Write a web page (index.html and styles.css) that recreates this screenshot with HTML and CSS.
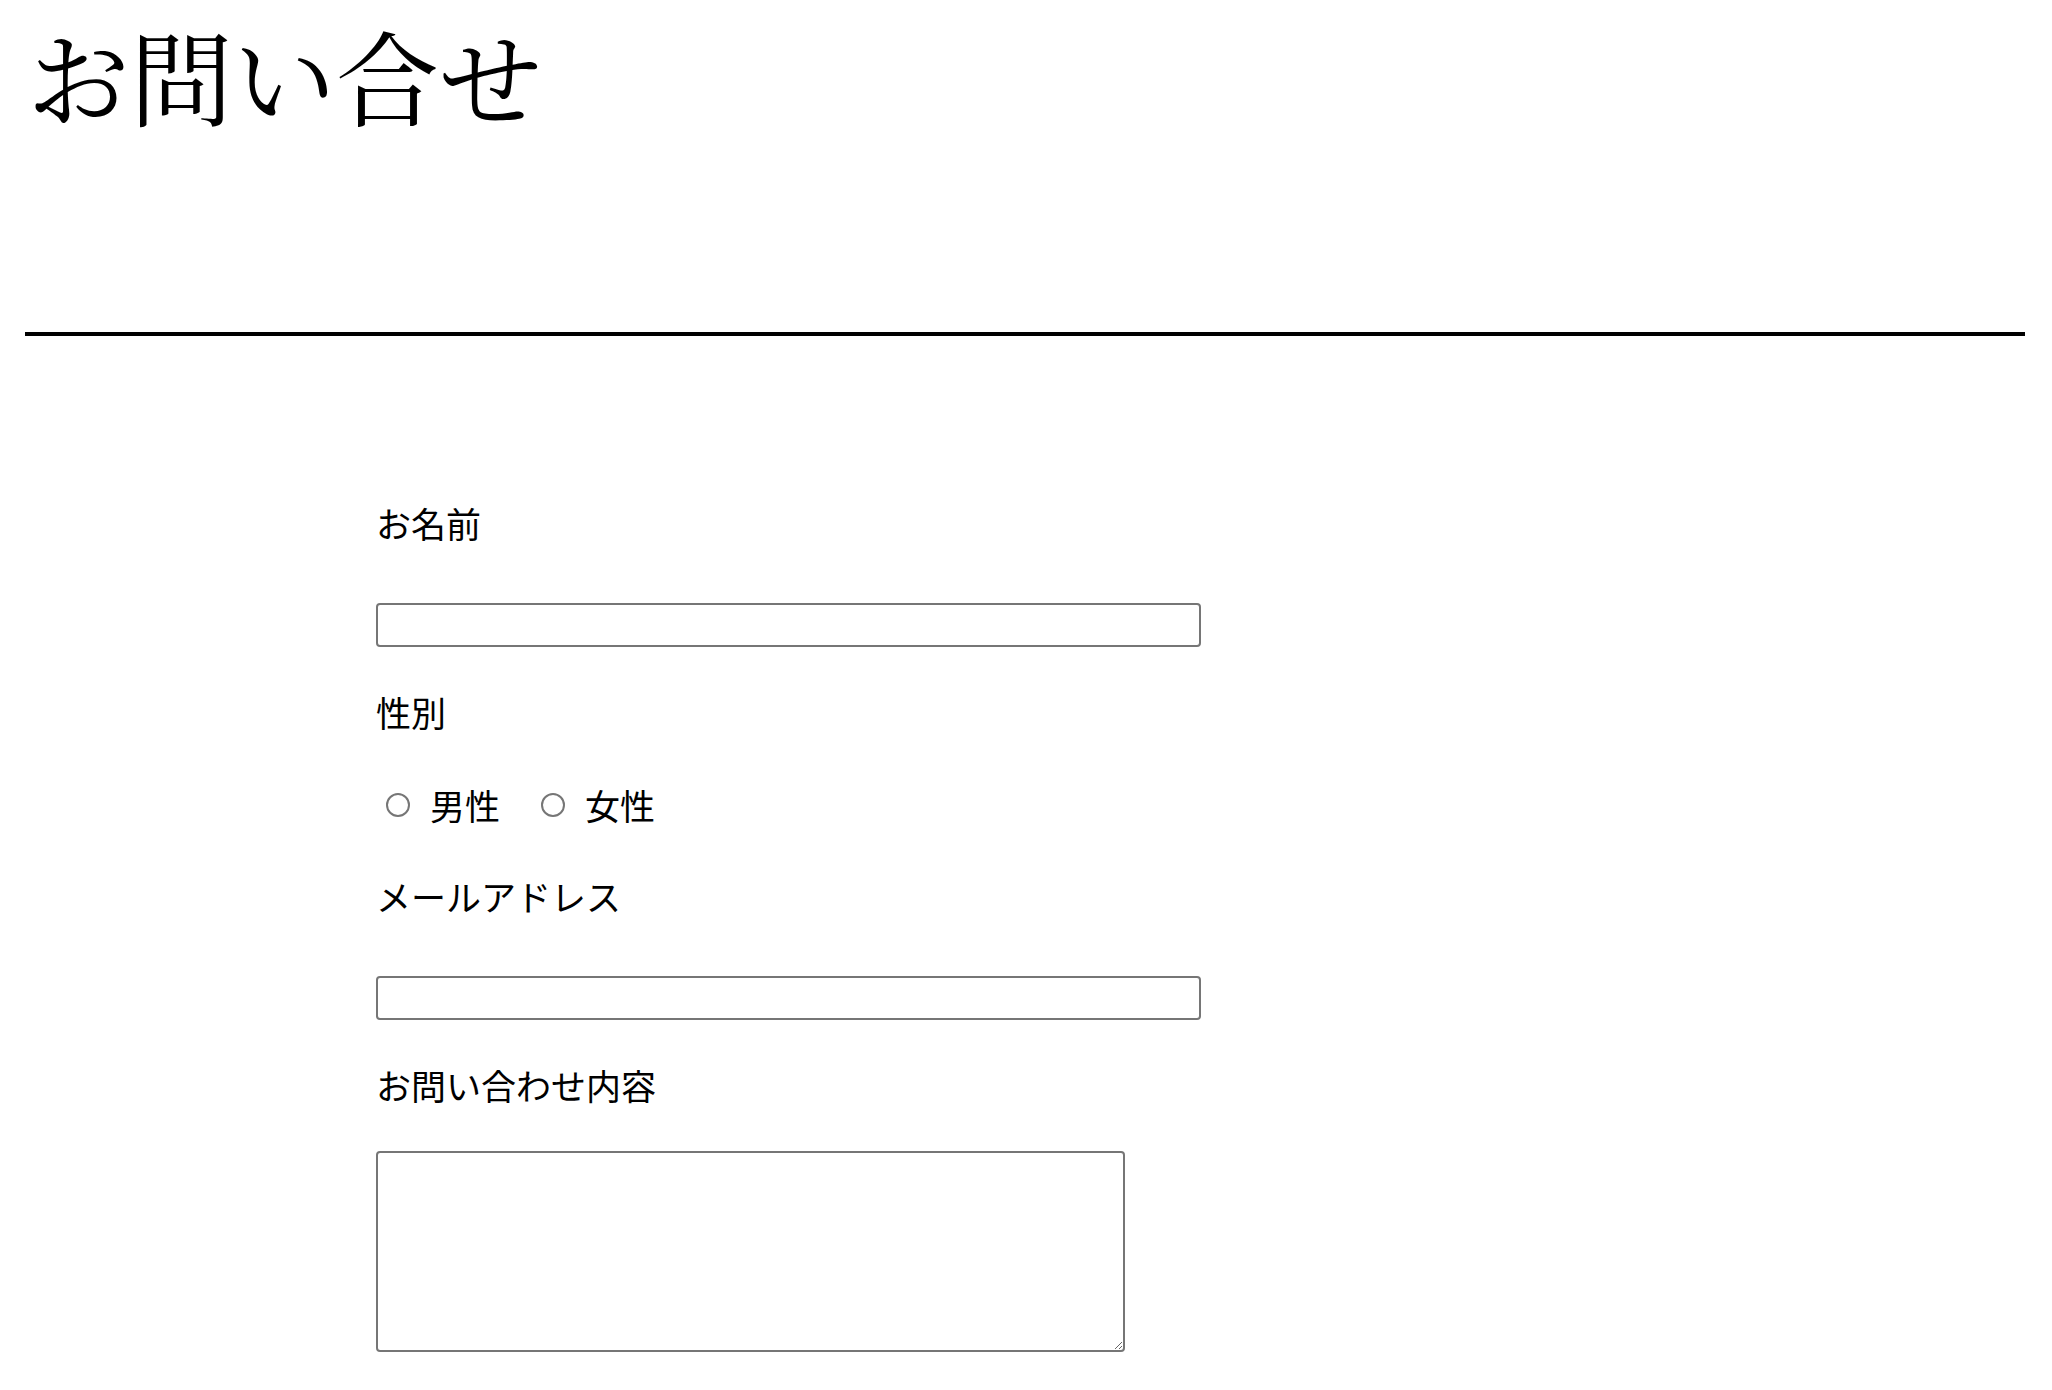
FILE: index.html
```html
<!DOCTYPE html>
<html lang="ja">
	<head>
		<meta charset="utf-8" />
		<title>お問い合せ</title>
		<link rel="stylesheet" href="styles.css">
	</head>
	<body>
		<div class="page">
			<h1 class="title">お問い合せ</h1>
			<hr class="rule">
			<form class="contact">
				<div class="field">
					<p class="label">お名前</p>
					<input type="text" class="text-box" name="name">
				</div>
				<div class="field">
					<p class="label">性別</p>
					<div class="radio-row">
						<label class="radio"><input type="radio" name="gender" value="male"><span>男性</span></label>
						<label class="radio"><input type="radio" name="gender" value="female"><span>女性</span></label>
					</div>
				</div>
				<div class="field">
					<p class="label">メールアドレス</p>
					<input type="email" class="text-box" name="email">
				</div>
				<div class="field">
					<p class="label label-area">お問い合わせ内容</p>
					<textarea class="message" name="message"></textarea>
				</div>
			</form>
		</div>
	</body>
</html>
```

FILE: styles.css
```css
body{
	margin:0;
	background-color:#fff;
	color:#000;
}
.page{
	padding:0 27px 0 25px;
}
.title{
	margin:0;
	padding:14px 0 0 2px;
	font-family:"Noto Serif CJK JP","Noto Sans CJK JP",serif;
	font-size:103px;
	font-weight:normal;
	line-height:120px;
}
.rule{
	margin:198px 0 0 0;
	border:none;
	border-top:4px solid #000;
	height:0;
}
.contact{
	padding:161px 0 40px 351px;
	font-family:"Noto Sans CJK JP",sans-serif;
	font-size:35px;
}
.field{
	margin-top:39px;
}
.field:first-child{
	margin-top:0;
}
.label{
	margin:0 0 54px 0;
	line-height:52px;
}
.label-area{
	margin-bottom:40px;
}
.text-box{
	display:block;
	box-sizing:border-box;
	width:825px;
	height:44px;
	margin:0;
	border:2px solid #767676;
	border-radius:4px;
	font-size:28px;
}
.radio-row{
	display:flex;
	gap:31px;
	margin-top:-13px;
	line-height:52px;
}
.radio{
	display:flex;
	align-items:center;
	gap:20px;
}
.radio input{
	-webkit-appearance:none;
	appearance:none;
	box-sizing:border-box;
	width:24px;
	height:24px;
	margin:0 0 0 10px;
	border:2px solid #767676;
	border-radius:50%;
	background:#fff;
}
.message{
	display:block;
	box-sizing:border-box;
	width:749px;
	height:201px;
	margin:0;
	border:2px solid #767676;
	border-radius:4px;
}
```
